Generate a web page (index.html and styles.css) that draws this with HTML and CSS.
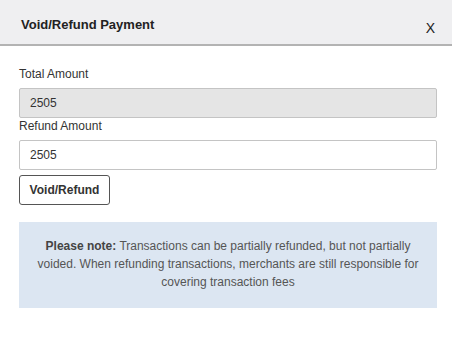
FILE: index.html
```html
<!DOCTYPE html>
<html lang="en">
<head>
    <meta charset="UTF-8">
    <meta name="viewport" content="width=device-width, initial-scale=1.0">
    <title>Void/Refund Payment</title>
    <link rel="stylesheet" href="styles.css">
</head>
<body>
    <!-- Modal header -->
    <div class="modal-header">
        <h1 class="modal-title">Void/Refund Payment</h1>
        <button class="close-btn" type="button">X</button>
    </div>

    <!-- Modal body -->
    <div class="modal-body">
        <label class="field-label" for="totalAmount">Total Amount</label>
        <input class="field-input" id="totalAmount" type="text" value="2505" disabled>

        <label class="field-label label-tight" for="refundAmount">Refund Amount</label>
        <input class="field-input" id="refundAmount" type="text" value="2505">

        <button class="btn" type="button">Void/Refund</button>

        <div class="note">
            <strong>Please note:</strong> Transactions can be partially refunded, but not partially voided. When refunding transactions, merchants are still responsible for covering transaction fees
        </div>
    </div>
</body>
</html>
```

FILE: styles.css
```css
body {
    margin: 0;
    padding: 0;
    font-family: 'Liberation Sans', Arial, sans-serif;
    background: #ffffff;
    color: #333;
}

/* Header */
.modal-header {
    height: 46px;
    box-sizing: border-box;
    background: #efeff1;
    border-bottom: 2px solid #b3b3b3;
    display: flex;
    align-items: flex-start;
    justify-content: space-between;
    padding: 0 17px 0 21px;
}

.modal-title {
    margin: 0;
    padding-top: 17px;
    font-size: 13px;
    line-height: 15px;
    font-weight: bold;
    color: #222;
}

.close-btn {
    margin: 20px 0 0;
    padding: 0;
    border: none;
    background: none;
    font-family: 'Liberation Sans', Arial, sans-serif;
    font-size: 14px;
    line-height: 16px;
    color: #222;
    cursor: pointer;
}

/* Body */
.modal-body {
    padding: 21px 15px 0 19px;
    display: flex;
    flex-direction: column;
    align-items: flex-start;
}

.field-label {
    font-size: 12px;
    line-height: 14px;
    color: #333;
    margin-bottom: 7px;
}

.label-tight {
    margin-top: 1px;
}

.field-input {
    width: 100%;
    height: 30px;
    box-sizing: border-box;
    border: 1px solid #c4c4c4;
    border-radius: 2px;
    padding: 0 10px;
    font-family: 'Liberation Sans', Arial, sans-serif;
    font-size: 12px;
    color: #333;
    background: #fff;
    margin: 0;
}

.field-input:disabled {
    background: #e5e5e5;
    color: #333;
}

.btn {
    margin-top: 5px;
    height: 30px;
    width: 91px;
    box-sizing: border-box;
    border: 1px solid #555;
    border-radius: 3px;
    background: #fff;
    font-family: 'Liberation Sans', Arial, sans-serif;
    font-size: 12px;
    font-weight: bold;
    color: #333;
    padding: 0;
    cursor: pointer;
}

/* Note box */
.note {
    margin-top: 17px;
    width: 100%;
    box-sizing: border-box;
    background: #dce6f2;
    padding: 15px 16px 17px;
    font-size: 12px;
    line-height: 18px;
    text-align: center;
    color: #555;
}

.note strong {
    color: #444;
}
```
